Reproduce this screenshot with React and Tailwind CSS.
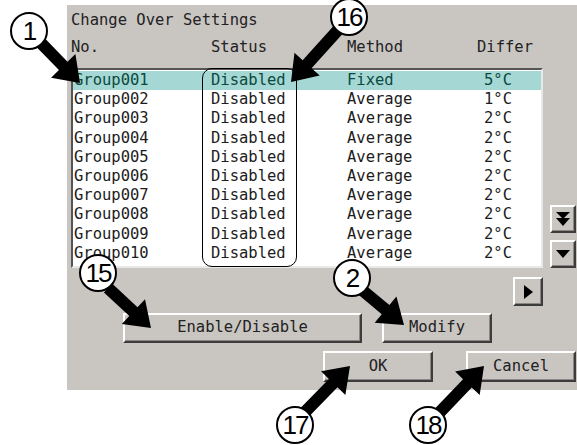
const rows = [
  { no: 'Group001', status: 'Disabled', method: 'Fixed', diff: '5°C' },
  { no: 'Group002', status: 'Disabled', method: 'Average', diff: '1°C' },
  { no: 'Group003', status: 'Disabled', method: 'Average', diff: '2°C' },
  { no: 'Group004', status: 'Disabled', method: 'Average', diff: '2°C' },
  { no: 'Group005', status: 'Disabled', method: 'Average', diff: '2°C' },
  { no: 'Group006', status: 'Disabled', method: 'Average', diff: '2°C' },
  { no: 'Group007', status: 'Disabled', method: 'Average', diff: '2°C' },
  { no: 'Group008', status: 'Disabled', method: 'Average', diff: '2°C' },
  { no: 'Group009', status: 'Disabled', method: 'Average', diff: '2°C' },
  { no: 'Group010', status: 'Disabled', method: 'Average', diff: '2°C' },
]

// callout arrows: start -> tip
const arrows = [
  [40, 42, 80, 83],
  [338, 30, 291, 82],
  [108, 288, 151, 328],
  [362, 290, 404, 325],
  [305, 412, 350, 366],
  [440, 412, 484, 366],
]

const callouts = [
  { n: '1', x: 29, y: 31 },
  { n: '16', x: 349, y: 17 },
  { n: '15', x: 98, y: 273 },
  { n: '2', x: 352, y: 278 },
  { n: '17', x: 295, y: 425 },
  { n: '18', x: 428, y: 425 },
]

function arrowPoints([x1, y1, x2, y2]) {
  const w = 12, hl = 24, hw = 17
  const dx = x2 - x1, dy = y2 - y1
  const L = Math.hypot(dx, dy)
  const ux = dx / L, uy = dy / L
  const px = -uy, py = ux
  const bx = x2 - ux * hl, by = y2 - uy * hl
  const pts = [
    [x1 + px * w / 2, y1 + py * w / 2],
    [bx + px * w / 2, by + py * w / 2],
    [bx + px * hw, by + py * hw],
    [x2, y2],
    [bx - px * hw, by - py * hw],
    [bx - px * w / 2, by - py * w / 2],
    [x1 - px * w / 2, y1 - py * w / 2],
  ]
  return pts.map(p => p.join(',')).join(' ')
}

const raised = 'bg-[#c9c6c2] border-2 border-t-white border-l-white border-b-[#3c3c3c] border-r-[#3c3c3c] shadow-[inset_-1px_-1px_0_#8a8784]'

function Btn({ className, children }) {
  return (
    <div className={`${raised} flex items-center justify-center text-[#222] ${className}`}>
      {children}
    </div>
  )
}

export default function App() {
  return (
    <div className="relative w-[577px] h-[445px] bg-white overflow-hidden font-['DejaVu_Sans_Mono','Liberation_Mono',monospace] text-[15.5px]">
      {/* Panel */}
      <div className="ml-[67px] mt-[5px] w-[510px] h-[385px] bg-[#c9c6c2] pl-[4px] pt-[5px] flex flex-col text-[#222]">
        <div className="h-[20px] leading-[20px]">Change Over Settings</div>

        <div className="mt-[7px] h-[20px] leading-[20px] grid grid-cols-[140px_136px_130px_1fr]">
          <span>No.</span>
          <span>Status</span>
          <span>Method</span>
          <span>Differ</span>
        </div>

        <div className="mt-[11px] flex items-end">
          {/* List */}
          <div className="w-[472px] h-[200px] bg-white border-2 border-t-[#555] border-l-[#555] border-r-[#e8e8e8] border-b-[#e8e8e8] pt-[1px]">
            {rows.map((r, i) => (
              <div
                key={r.no}
                className={`h-[19.2px] leading-[19.2px] pl-[1px] grid grid-cols-[137px_136px_137px_1fr] ${i === 0 ? 'bg-[#a5d7d4] text-[#0b4a3e]' : 'text-[#1c1c1c]'}`}
              >
                <span>{r.no}</span>
                <span>{r.status}</span>
                <span>{r.method}</span>
                <span>{r.diff}</span>
              </div>
            ))}
          </div>

          {/* Scroll buttons */}
          <div className="ml-[7px] flex flex-col gap-[7px]">
            <Btn className="w-[26px] h-[28px]">
              <svg width="16" height="18" viewBox="0 0 16 18">
                <polygon points="1,2 15,2 8,9" fill="#000" />
                <polygon points="1,8 15,8 8,16" fill="#000" />
              </svg>
            </Btn>
            <Btn className="w-[26px] h-[28px]">
              <svg width="16" height="12" viewBox="0 0 16 12">
                <polygon points="1,2 15,2 8,10" fill="#000" />
              </svg>
            </Btn>
          </div>
        </div>

        <div className="mt-[9px] ml-[442px]">
          <Btn className="w-[30px] h-[29px]">
            <svg width="12" height="16" viewBox="0 0 12 16">
              <polygon points="2,1 11,8 2,15" fill="#000" />
            </svg>
          </Btn>
        </div>

        <div className="mt-[7px] flex">
          <Btn className="ml-[52px] w-[239px] h-[30px]">Enable/Disable</Btn>
          <Btn className="ml-[20px] w-[110px] h-[30px]">Modify</Btn>
        </div>

        <div className="mt-[8px] flex">
          <Btn className="ml-[252px] w-[110px] h-[31px]">OK</Btn>
          <Btn className="ml-[33px] w-[110px] h-[31px]">Cancel</Btn>
        </div>
      </div>

      {/* Status column highlight outline */}
      <div className="absolute left-[202px] top-[68px] w-[95px] h-[199px] border border-black rounded-[10px]" />

      {/* Callout arrows */}
      <svg className="absolute inset-0 pointer-events-none" width="577" height="445">
        {arrows.map((a, i) => (
          <polygon key={i} points={arrowPoints(a)} fill="#000" />
        ))}
      </svg>

      {/* Callout circles */}
      {callouts.map(c => (
        <div
          key={c.n}
          className="absolute w-[38px] h-[38px] -translate-x-1/2 -translate-y-1/2 rounded-full bg-white border-2 border-black flex items-center justify-center font-['Liberation_Sans',Arial,sans-serif] text-[26px] leading-none tracking-[-2px] text-black"
          style={{ left: c.x, top: c.y }}
        >
          {c.n}
        </div>
      ))}
    </div>
  )
}
